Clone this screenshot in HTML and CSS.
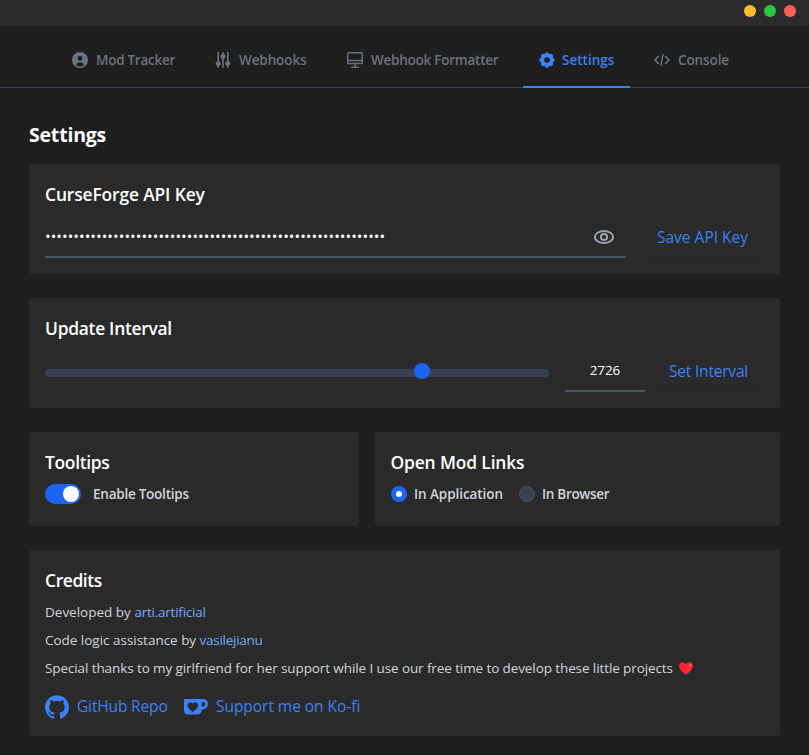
FILE: index.html
```html
<!DOCTYPE html>
<html lang="en">
<head>
<meta charset="utf-8">
<title>Settings</title>
<link rel="stylesheet" href="styles.css">
</head>
<body>
<header class="titlebar">
  <span class="dot yellow"></span><span class="dot green"></span><span class="dot red"></span>
</header>
<nav class="tabs">
  <a class="tab tracker"><svg width="16" height="16" viewBox="0 0 20 20" fill="currentColor"><path d="M10 0a10 10 0 1 0 10 10A10.011 10.011 0 0 0 10 0Zm0 5a3 3 0 1 1 0 6 3 3 0 0 1 0-6Zm0 13a8.949 8.949 0 0 1-4.951-1.488A3.987 3.987 0 0 1 9 13h2a3.987 3.987 0 0 1 3.951 3.512A8.949 8.949 0 0 1 10 18Z"/></svg><span>Mod Tracker</span></a>
  <a class="tab webhooks"><svg width="16" height="16" viewBox="0 0 20 20" fill="currentColor"><path d="M5 11.424V1a1 1 0 1 0-2 0v10.424a3.228 3.228 0 0 0 0 6.152V19a1 1 0 1 0 2 0v-1.424a3.228 3.228 0 0 0 0-6.152ZM19.25 14.5A3.243 3.243 0 0 0 17 11.424V1a1 1 0 0 0-2 0v10.424a3.227 3.227 0 0 0 0 6.152V19a1 1 0 1 0 2 0v-1.424a3.243 3.243 0 0 0 2.25-3.076Zm-6-9A3.243 3.243 0 0 0 11 2.424V1a1 1 0 0 0-2 0v1.424a3.228 3.228 0 0 0 0 6.152V19a1 1 0 1 0 2 0V8.576A3.243 3.243 0 0 0 13.25 5.5Z"/></svg><span>Webhooks</span></a>
  <a class="tab formatter"><svg width="16" height="16" viewBox="0 0 16 16" fill="none" stroke="currentColor" stroke-width="1.4"><rect x=".7" y=".7" width="14.6" height="10.8" rx=".8"/><path d="M.7 8.5h14.6M8 11.5v3.8M4.3 15.3h7.4"/></svg><span>Webhook Formatter</span></a>
  <a class="tab settings active"><svg width="16" height="16" viewBox="0 0 20 20" fill="currentColor"><path d="M18 7.5h-.423l-.452-1.09.3-.3a1.5 1.5 0 0 0 0-2.121L16.01 2.575a1.5 1.5 0 0 0-2.121 0l-.3.3-1.089-.452V2A1.5 1.5 0 0 0 11 .5H9A1.5 1.5 0 0 0 7.5 2v.423l-1.09.452-.3-.3a1.5 1.5 0 0 0-2.121 0L2.576 3.99a1.5 1.5 0 0 0 0 2.121l.3.3L2.423 7.5H2A1.5 1.5 0 0 0 .5 9v2A1.5 1.5 0 0 0 2 12.5h.423l.452 1.09-.3.3a1.5 1.5 0 0 0 0 2.121l1.415 1.413a1.5 1.5 0 0 0 2.121 0l.3-.3 1.09.452V18A1.5 1.5 0 0 0 9 19.5h2a1.5 1.5 0 0 0 1.5-1.5v-.423l1.09-.452.3.3a1.5 1.5 0 0 0 2.121 0l1.415-1.414a1.5 1.5 0 0 0 0-2.121l-.3-.3.452-1.09H18a1.5 1.5 0 0 0 1.5-1.5V9A1.5 1.5 0 0 0 18 7.5Zm-8 6a3.5 3.5 0 1 1 0-7 3.5 3.5 0 0 1 0 7Z"/></svg><span>Settings</span></a>
  <a class="tab console"><svg width="16" height="16" viewBox="0 0 16 16" fill="none" stroke="currentColor" stroke-width="1.7" stroke-linecap="round" stroke-linejoin="round"><path d="M4.4 4.5 1 8l3.4 3.5M11.6 4.500 15 8l-3.400 3.500"/><path d="M9 2.600 7 13.400" stroke-width="1.400"/></svg><span>Console</span></a>
</nav>
<main class="page">
  <h1>Settings</h1>
  <section class="card">
    <h2 class="t-key">CurseForge API Key</h2>
    <div class="row">
      <div class="key-field">
        <input class="key" type="password" value="012345678901234567890123456789012345678901234567890123456789" aria-label="CurseForge API Key">
        <svg class="eye" width="22" height="16" viewBox="0 0 22 16" fill="none" stroke="currentColor" stroke-width="2"><ellipse cx="11" cy="8" rx="9.1" ry="6"/><circle cx="11" cy="8" r="3.1"/></svg>
      </div>
      <button class="btn save">Save API Key</button>
    </div>
  </section>
  <section class="card">
    <h2 class="t-update">Update Interval</h2>
    <div class="row">
      <div class="slider"><span class="thumb"></span></div>
      <input class="number" type="text" value="2726" aria-label="Interval">
      <button class="btn set">Set Interval</button>
    </div>
  </section>
  <div class="pair">
    <section class="card small">
      <h2 class="t-tips">Tooltips</h2>
      <label class="option"><span class="toggle"></span><span class="l-enable">Enable Tooltips</span></label>
    </section>
    <section class="card small">
      <h2 class="t-open">Open Mod Links</h2>
      <div class="options">
        <label class="option"><span class="radio checked"></span><span class="l-app">In Application</span></label>
        <label class="option"><span class="radio"></span><span class="l-browser">In Browser</span></label>
      </div>
    </section>
  </div>
  <section class="card credits">
    <h2 class="t-credits">Credits</h2>
    <p><span class="c-dev">Developed by </span><a class="c-arti">arti.artificial</a></p>
    <p><span class="c-code">Code logic assistance by </span><a class="c-vas">vasilejianu</a></p>
    <p class="thanks"><span class="c-thanks">Special thanks to my girlfriend for her support while I use our free time to develop these little projects</span><svg width="14" height="13" viewBox="0 0 14 13"><path fill="#f8262e" d="M7 13C4.200 10.800 0 7.700 0 4.100 0 1.700 1.500.2 3.600.2 5.200.2 6.400 1 7 2.300 7.600 1 8.800.2 10.400.2 12.500.2 14 1.700 14 4.100 14 7.700 9.800 10.800 7 13Z"/><ellipse cx="10.900" cy="3.300" rx="1" ry="1.600" fill="#ff6a5a" transform="rotate(35 10.900 3.300)"/></svg></p>
    <div class="links">
      <a class="link gh"><svg width="24" height="24" viewBox="0 0 24 24" fill="currentColor"><path d="M12 .297c-6.63 0-12 5.373-12 12 0 5.303 3.438 9.8 8.205 11.385.6.113.82-.258.82-.577 0-.285-.01-1.04-.015-2.04-3.338.724-4.042-1.61-4.042-1.61C4.422 18.07 3.633 17.7 3.633 17.7c-1.087-.744.084-.729.084-.729 1.205.084 1.838 1.236 1.838 1.236 1.07 1.835 2.809 1.305 3.495.998.108-.776.417-1.305.76-1.605-2.665-.3-5.466-1.332-5.466-5.93 0-1.31.465-2.38 1.235-3.22-.135-.303-.54-1.523.105-3.176 0 0 1.005-.322 3.3 1.23.96-.267 1.98-.399 3-.405 1.02.006 2.04.138 3 .405 2.28-1.552 3.285-1.23 3.285-1.23.645 1.653.24 2.873.12 3.176.765.84 1.23 1.91 1.23 3.22 0 4.61-2.805 5.625-5.475 5.92.42.36.81 1.096.81 2.22 0 1.606-.015 2.896-.015 3.286 0 .315.21.69.825.57C20.565 22.092 24 17.592 24 12.297c0-6.627-5.373-12-12-12"/></svg><span>GitHub Repo</span></a>
      <a class="link kofi"><svg width="24" height="24" viewBox="0 0 24 24" fill="currentColor" fill-rule="evenodd"><path d="M.8 4h18.4c2.9 0 4.8 2 4.8 4.8 0 3.400-2.500 5.800-6.200 5.800-.1 3.200-1.700 5-4.500 5H4.200C1.600 19.600 0 18 0 15.400V4.800Q0 4 .8 4ZM17.800 7v4.700h.9c1.500 0 2.500-.9 2.500-2.400S20.200 7 18.700 7ZM8.800 17c2.500-1.800 5.200-3.900 5.200-6.400 0-1.800-1.200-3-2.800-3-1.100 0-2 .5-2.400 1.400-.4-.9-1.300-1.400-2.400-1.400-1.600 0-2.800 1.200-2.800 3 0 2.500 2.700 4.600 5.200 6.400Z"/></svg><span>Support me on Ko-fi</span></a>
    </div>
  </section>
</main>
</body>
</html>
```
FILE: styles.css
```css
* { box-sizing: border-box; }
body { margin: 0; height: 755px; overflow: hidden; background: #1e1e1e; color: #fff; font-family: "Open Sans", "Noto Sans", sans-serif; font-size: 13.5px; line-height: 20px; }
h1, h2, p { margin: 0; }
svg { display: block; flex: none; }
span, a { white-space: pre; }

.titlebar { height: 26px; background: #2b2b2b; display: flex; justify-content: flex-end; gap: 8px; padding: 5px 13px; }
.dot { width: 12px; height: 12px; border-radius: 50%; }
.yellow { background: #ffbd2e; }
.green { background: #28c940; }
.red { background: #ff5f56; }

.tabs { height: 62px; display: flex; gap: 8px; padding-left: 56px; background: linear-gradient(#374151, #374151) 0 61px / 100% 1px no-repeat; }
.tab { display: flex; align-items: center; gap: 8px; padding: 8px 0 0 16px; border-bottom: 2px solid transparent; color: #6b7280; font-weight: 600; }
.tab span { margin-top: -1px; }
.tracker { width: 135px; letter-spacing: -.27px; }
.webhooks { width: 124px; letter-spacing: -.1px; }
.formatter { width: 184px; letter-spacing: -.24px; }
.settings { width: 107px; gap: 7px; }
.console { width: 107px; letter-spacing: -.1px; }
.active { color: #3b82f6; border-color: #3b82f6; }

.page { padding: 33px 29px 0; }
h1 { font-size: 19.5px; line-height: 28px; letter-spacing: -.2px; font-weight: 700; margin-bottom: 15px; }
h2 { font-size: 17.4px; line-height: 28px; font-weight: 600; }
.card { background: #2a2a2a; border-radius: 4px; padding: 16px; margin-bottom: 24px; }
.t-key { letter-spacing: -.13px; }
.t-update { letter-spacing: -.28px; }
.t-tips { letter-spacing: -.3px; }
.t-open { letter-spacing: -.14px; }
.t-credits { letter-spacing: -.38px; }

.row { display: flex; height: 42px; margin-top: 8px; }
input { font: inherit; color: #fff; background: none; border: 0; outline: 0; padding: 0; border-bottom: 2px solid #4b5563; border-radius: 0; }
.key-field { width: 581px; display: flex; align-items: center; border-bottom: 2px solid #4b5563; color: #9ca3af; }
.key { width: 548px; border: 0; font-size: 15px; letter-spacing: .03px; }
.eye { margin-top: 2px; }
.btn { font: inherit; font-size: 15.5px; background: none; border: 0; border-bottom: 1px solid #262626; border-radius: 4px; color: #3b82f6; padding: 2px 0 0 16px; height: 41px; text-align: left; white-space: nowrap; }
.save { width: 122px; margin-left: 16px; padding-left: 15px; }
.set { width: 111px; margin-left: 8px; letter-spacing: -.2px; }
.slider { width: 504px; height: 8px; margin: 19px 16px 0 0; border-radius: 4px; background: #374151; }
.thumb { display: block; width: 16px; height: 16px; border-radius: 50%; background: #1c64f2; margin: -6px 0 0 369px; }
.number { width: 80px; text-align: center; letter-spacing: -.1px; }

.pair { display: grid; grid-template-columns: 330px 405px; gap: 16px; margin-bottom: 24px; }
.small { height: 94px; margin: 0; }
.small:last-child { padding-left: 15.5px; }
.options { display: flex; gap: 16px; }
.option { display: flex; align-items: center; height: 20px; margin-top: 8px; color: #d1d5db; font-weight: 600; }
.toggle { width: 36px; height: 20px; border-radius: 10px; background: #1c64f2; padding: 2px 2px 2px 18px; margin-right: 12px; }
.toggle::after { content: ""; display: block; width: 16px; height: 16px; border-radius: 50%; background: #fff; }
.radio { width: 16px; height: 16px; border-radius: 50%; background: #374151; border: 1px solid #4b5563; margin-right: 7.500px; }
.checked { background: #fff; border: 5px solid #1c64f2; }
.l-enable { letter-spacing: -.24px; }
.l-app { width: 88.5px; letter-spacing: -.07px; }
.l-browser { letter-spacing: -.3px; }

.credits { height: 186px; padding-bottom: 0; }
.credits p { line-height: 28px; height: 28px; color: #d1d5db; }
.credits h2 { margin-bottom: 4px; }
.credits p a { color: #76a9fa; }
.c-arti { letter-spacing: -.23px; }
.c-code { letter-spacing: -.02px; }
.c-vas { letter-spacing: -.27px; }
.c-thanks { letter-spacing: -.1px; width: 634px; }
.thanks { display: flex; align-items: center; }
.links { display: flex; margin-top: 13px; gap: 16px; font-size: 15.5px; }
.link { display: flex; align-items: center; gap: 8px; color: #3b82f6; }
.link span { margin-top: -2px; }
.gh { width: 123px; letter-spacing: -.15px; }
.kofi { letter-spacing: -.04px; }
```
